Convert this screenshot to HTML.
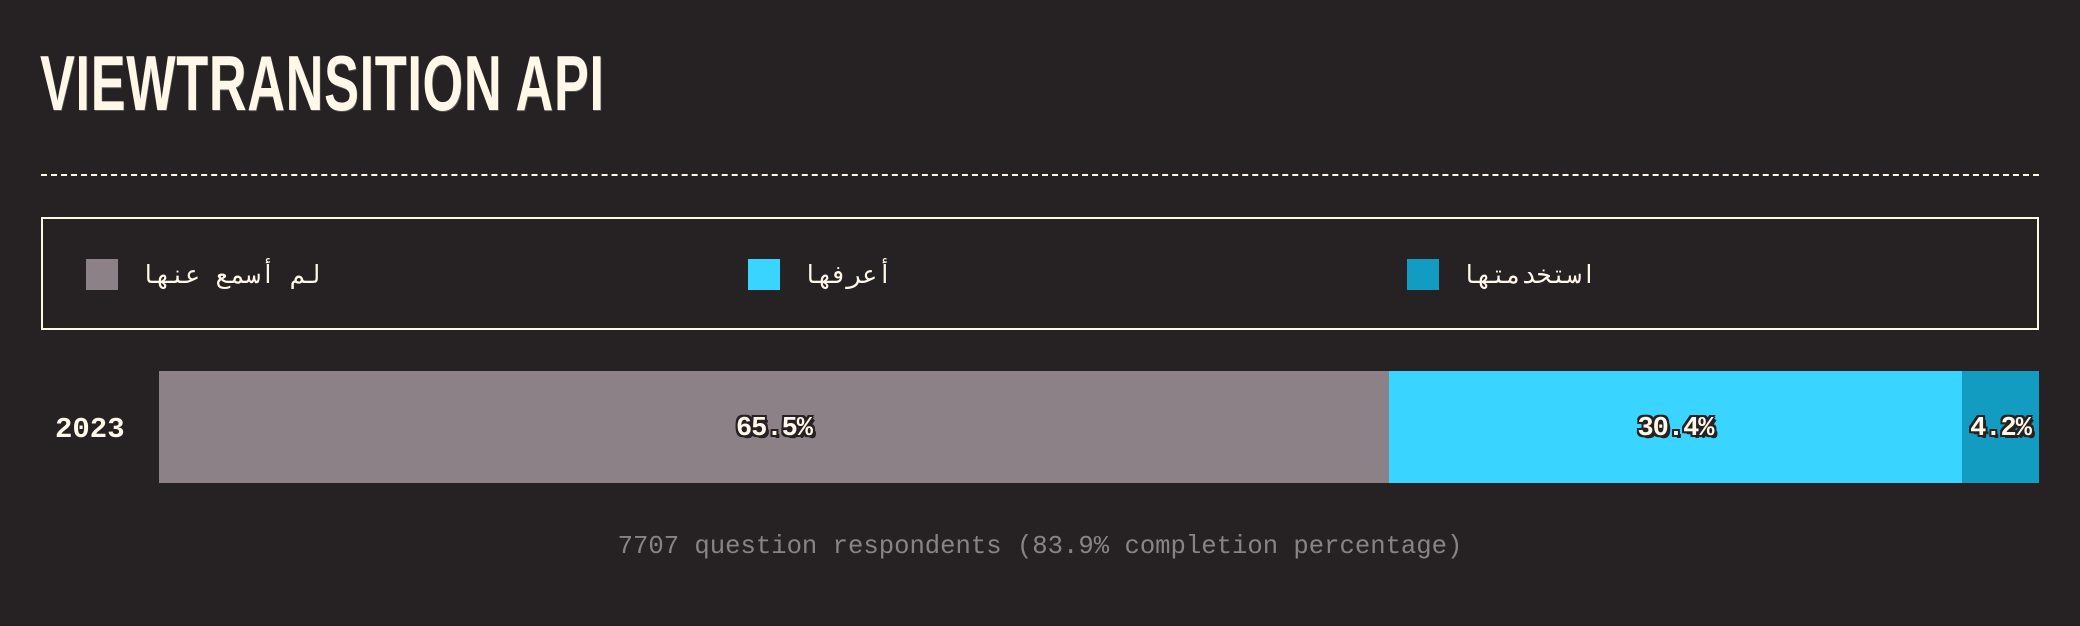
<!DOCTYPE html>
<html><head><meta charset="utf-8"><style>
*{margin:0;padding:0;box-sizing:border-box}
body{width:2080px;height:626px;background:#262223;position:relative;overflow:hidden;font-family:"Liberation Mono","DejaVu Sans Mono",monospace;color:#fff7e8}
.title{position:absolute;left:40px;top:44px;font-family:"Liberation Sans",sans-serif;font-weight:bold;font-size:78px;line-height:78px;white-space:nowrap;transform:scaleX(0.67);transform-origin:left top;letter-spacing:1px;color:#fff7e8;text-shadow:1px 1px 0 #555}
.dash{position:absolute;left:41px;top:174px;width:1998px;border-top:2px dashed #fff7e8}
.legend{position:absolute;left:41px;top:217px;width:1998px;height:113px;border:2px solid #fff7e8}
.item{position:absolute;top:40px;display:flex;align-items:center}
.sw{width:32px;height:31px;margin-right:22px}
.lab{font-family:"DejaVu Sans Mono","DejaVu Sans",sans-serif;font-size:25px;color:#fff7e8}
.year{position:absolute;left:55px;top:413px;font-weight:bold;font-size:29px;line-height:34px}
.bar{position:absolute;top:371px;height:112px;display:flex;align-items:center;justify-content:center;padding-top:4px}
.pct{font-weight:bold;font-size:27px;color:#fff7e8;letter-spacing:-1px;text-shadow:-2px -2px 0 #262223,2px -2px 0 #262223,-2px 2px 0 #262223,2px 2px 0 #262223,0 2px 0 #262223,0 -2px 0 #262223,2px 0 0 #262223,-2px 0 0 #262223,3px 3px 0 #262223}
.foot{position:absolute;left:0;width:2080px;top:532px;text-align:center;font-size:25.6px;color:#8a8385}
</style></head><body>
<div class="title">VIEWTRANSITION API</div>
<div class="dash"></div>
<div class="legend">
 <div class="item" style="left:43px"><div class="sw" style="background:#8c8186"></div><span class="lab" dir="rtl">لم أسمع عنها</span></div>
 <div class="item" style="left:705px"><div class="sw" style="background:#39d4ff"></div><span class="lab" dir="rtl">أعرفها</span></div>
 <div class="item" style="left:1364px"><div class="sw" style="background:#139cc2"></div><span class="lab" dir="rtl">استخدمتها</span></div>
</div>
<div class="year">2023</div>
<div class="bar" style="left:159px;width:1230px;background:#8c8186"><span class="pct">65.5%</span></div>
<div class="bar" style="left:1389px;width:573px;background:#39d4ff"><span class="pct">30.4%</span></div>
<div class="bar" style="left:1962px;width:77px;background:#139cc2"><span class="pct">4.2%</span></div>
<div class="foot">7707 question respondents (83.9% completion percentage)</div>
</body></html>
